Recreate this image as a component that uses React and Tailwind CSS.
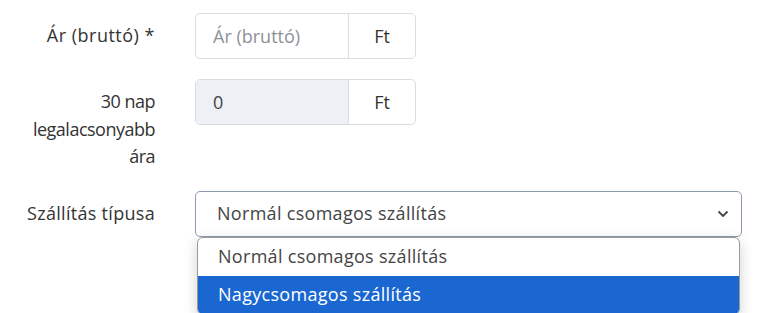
import React from "react";

const font = { fontFamily: '"Open Sans", "Noto Sans", sans-serif' };

const App = () => {
  return (
    // Main form
    <div className="w-[772px] h-[313px] bg-white text-[18px] text-[#333] relative overflow-hidden" style={font}>
      <div className="flex flex-col pt-[13px]">
        {/* Price row */}
        <div className="flex">
          <div className="w-[155px] text-right pt-[9px] leading-[27px] tracking-[0.5px]">Ár (bruttó) *</div>
          <div className="ml-[40px] flex w-[221px] h-[46px] border border-[#d8dde3] rounded-[5px] overflow-hidden">
            <div className="w-[152px] flex items-center pl-[17px] text-[#8c9197]">Ár (bruttó)</div>
            <div className="flex-1 flex items-center justify-center border-l border-[#d8dde3]">Ft</div>
          </div>
        </div>

        {/* 30 day lowest price */}
        <div className="flex mt-[20px]">
          <div className="w-[155px] text-right pt-[9px] leading-[27.5px] pl-[10px] tracking-[-0.5px]">
            30 nap legalacsonyabb ára
          </div>
          <div className="ml-[40px] flex w-[221px] h-[46px] border border-[#d8dde3] rounded-[5px] overflow-hidden">
            <div className="w-[152px] flex items-center pl-[17px] bg-[#edf0f5] text-[#444]">0</div>
            <div className="flex-1 flex items-center justify-center border-l border-[#d8dde3]">Ft</div>
          </div>
        </div>

        {/* Shipping type */}
        <div className="flex mt-[20px]">
          <div className="w-[155px] text-right pt-[9px] leading-[27px] tracking-[0.3px]">Szállítás típusa</div>
          <div className="ml-[40px] relative">
            <div className="flex items-center w-[547px] h-[46px] border border-[#8f9bb3] rounded-[5px] pl-[21px] pr-[12px] text-[#444] tracking-[0.3px]">
              <span className="flex-1">Normál csomagos szállítás</span>
              <svg width="12" height="8" viewBox="0 0 12 8" fill="none" stroke="#444" strokeWidth="1.8">
                <path d="M1.5 1.5 L6 6 L10.5 1.5" />
              </svg>
            </div>

            {/* Open dropdown */}
            <div className="absolute left-[2px] top-[46px] w-[543px] rounded-[6px] border border-[#9a9a9a] bg-white overflow-hidden shadow-[0_4px_14px_rgba(0,0,0,0.18)] tracking-[0.3px]">
              <div className="h-[38px] flex items-center pl-[20px] text-[#444]">Normál csomagos szállítás</div>
              <div className="h-[38px] flex items-center pl-[20px] bg-[#1a67d2] text-white">Nagycsomagos szállítás</div>
            </div>
          </div>
        </div>
      </div>
    </div>
  );
};

export default App;
